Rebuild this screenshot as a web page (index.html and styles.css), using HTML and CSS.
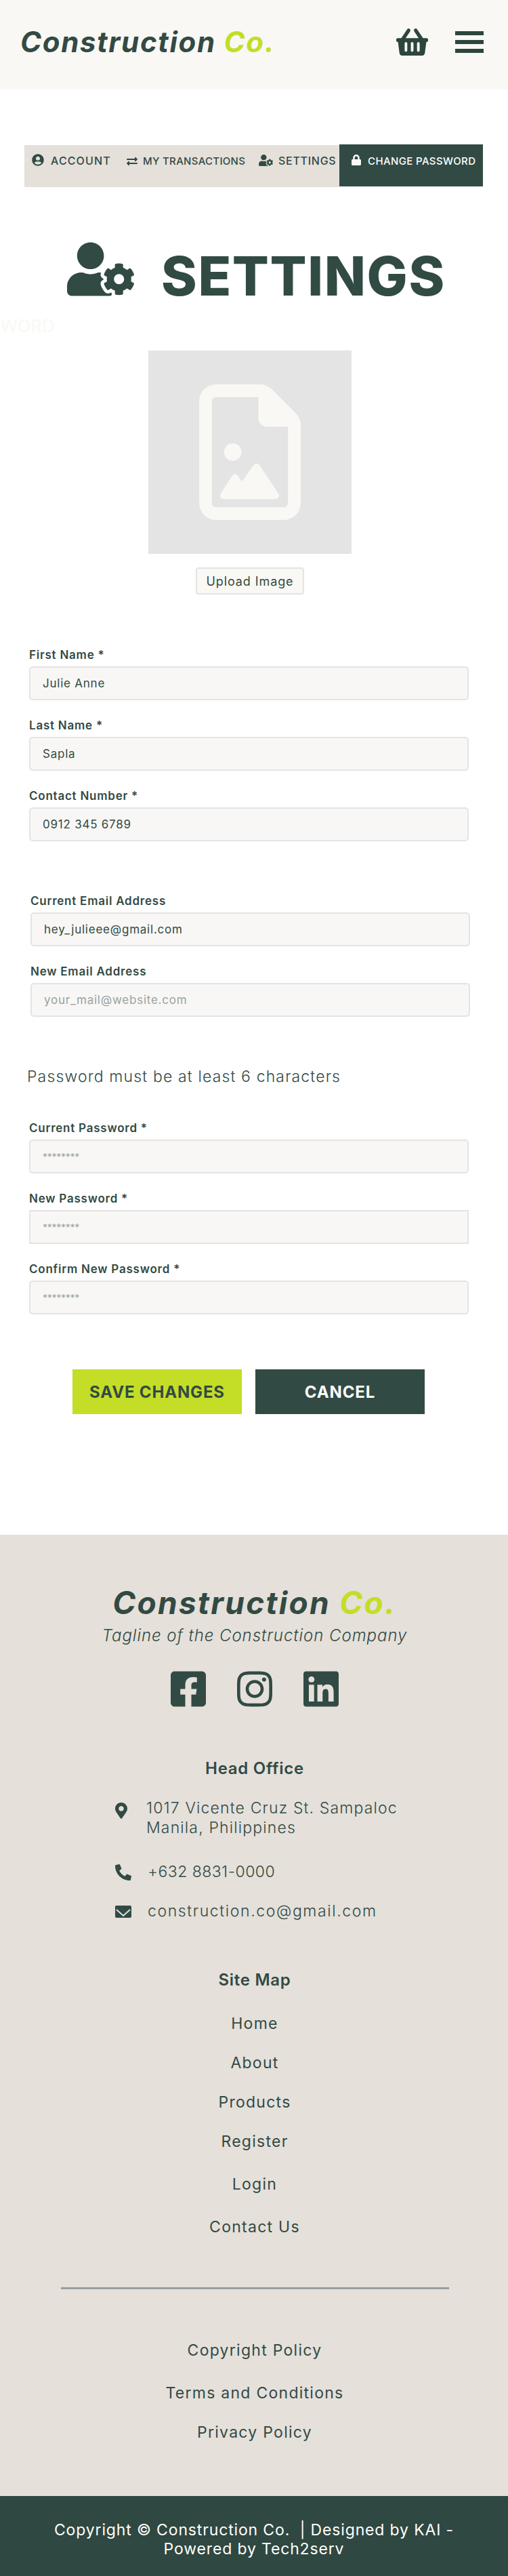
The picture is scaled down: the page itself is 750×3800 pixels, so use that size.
FILE: index.html
```html
<!DOCTYPE html>
<html lang="en">
<head>
<meta charset="utf-8">
<title>Settings - Construction Co.</title>
<link rel="stylesheet" href="styles.css">
</head>
<body>
<header class="topbar">
  <a class="logo logo-small" href="#">Construction <span class="accent">Co.</span></a>
  <div class="top-actions">
    <svg class="icon basket" viewBox="0 32 576 448" preserveAspectRatio="none"><path d="M576 216v16c0 13.255-10.745 24-24 24h-8l-26.113 182.788C514.509 462.435 494.257 480 470.37 480H105.63c-23.887 0-44.139-17.565-47.518-41.212L32 256h-8c-13.255 0-24-10.745-24-24v-16c0-13.255 10.745-24 24-24h67.341l106.78-146.821c10.395-14.292 30.407-17.453 44.701-7.058 14.293 10.395 17.453 30.408 7.058 44.701L170.477 192h235.046L326.12 82.821c-10.395-14.292-7.234-34.306 7.059-44.701 14.291-10.395 34.306-7.235 44.701 7.058L484.659 192H552c13.255 0 24 10.745 24 24zM312 392V280c0-13.255-10.745-24-24-24s-24 10.745-24 24v112c0 13.255 10.745 24 24 24s24-10.745 24-24zm112 0V280c0-13.255-10.745-24-24-24s-24 10.745-24 24v112c0 13.255 10.745 24 24 24s24-10.745 24-24zm-224 0V280c0-13.255-10.745-24-24-24s-24 10.745-24 24v112c0 13.255 10.745 24 24 24s24-10.745 24-24z"/></svg>
    <div class="burger"><span></span><span></span><span></span></div>
  </div>
</header>

<span class="ghost">WORD</span>

<main class="content">
  <nav class="tabs">
    <div class="tab-list">
      <a class="tab tab-account" href="#">
        <svg class="icon i-account" viewBox="0 0 496 512"><path d="M248 8C111 8 0 119 0 256s111 248 248 248 248-111 248-248S385 8 248 8zm0 96c48.6 0 88 39.4 88 88s-39.4 88-88 88-88-39.4-88-88 39.4-88 88-88zm0 344c-58.7 0-111.3-26.6-146.5-68.2 18.8-35.4 55.6-59.8 98.5-59.8 2.4 0 4.8.4 7.1 1.1 13 4.2 26.6 6.9 40.9 6.9 14.3 0 28-2.7 40.9-6.9 2.3-.7 4.7-1.1 7.1-1.1 42.9 0 79.7 24.4 98.5 59.8C359.3 421.4 306.7 448 248 448z"/></svg>
        <span>ACCOUNT</span>
      </a>
      <a class="tab tab-trans" href="#">
        <svg class="icon i-trans" viewBox="0 0 512 512"><path d="M0 168v-16c0-13.255 10.745-24 24-24h360V80c0-21.367 25.899-32.042 40.971-16.971l80 80c9.372 9.373 9.372 24.569 0 33.941l-80 80C409.956 271.982 384 261.456 384 240v-48H24c-13.255 0-24-10.745-24-24zm488 152H128v-48c0-21.314-25.862-32.08-40.971-16.971l-80 80c-9.372 9.373-9.372 24.569 0 33.941l80 80C102.057 463.997 128 453.437 128 432v-48h360c13.255 0 24-10.745 24-24v-16c0-13.255-10.745-24-24-24z"/></svg>
        <span>MY TRANSACTIONS</span>
      </a>
      <a class="tab tab-settings" href="#">
        <svg class="icon i-settings" viewBox="0 0 640 512"><path d="M610.5 373.3c2.6-14.1 2.6-28.5 0-42.6l25.8-14.9c3-1.7 4.3-5.2 3.3-8.5-6.7-21.6-18.2-41.2-33.2-57.4-2.3-2.5-6-3.1-9-1.4l-25.8 14.9c-10.9-9.3-23.4-16.5-36.9-21.3v-29.8c0-3.4-2.4-6.4-5.7-7.1-22.3-5-45-4.8-66.2 0-3.3.7-5.7 3.7-5.7 7.1v29.8c-13.5 4.8-26 12-36.9 21.3l-25.8-14.9c-2.9-1.7-6.7-1.1-9 1.4-15 16.2-26.5 35.8-33.2 57.4-1 3.3.4 6.8 3.3 8.5l25.8 14.9c-2.6 14.1-2.6 28.5 0 42.6l-25.8 14.9c-3 1.7-4.3 5.2-3.3 8.5 6.7 21.6 18.2 41.1 33.2 57.4 2.3 2.5 6 3.1 9 1.4l25.8-14.9c10.9 9.3 23.4 16.5 36.9 21.3v29.8c0 3.4 2.4 6.4 5.7 7.1 22.3 5 45 4.8 66.2 0 3.3-.7 5.7-3.7 5.7-7.1v-29.8c13.5-4.8 26-12 36.9-21.3l25.8 14.9c2.9 1.7 6.7 1.1 9-1.4 15-16.2 26.5-35.8 33.2-57.4 1-3.3-.4-6.8-3.3-8.5l-25.8-14.9zM496 400.5c-26.8 0-48.5-21.8-48.5-48.5s21.8-48.5 48.5-48.5 48.5 21.8 48.5 48.5-21.7 48.5-48.5 48.5zM224 256c70.7 0 128-57.3 128-128S294.7 0 224 0 96 57.3 96 128s57.3 128 128 128zm201.2 226.5c-2.3-1.2-4.6-2.6-6.8-3.9l-7.9 4.6c-6 3.4-12.8 5.3-19.6 5.3-10.9 0-21.4-4.6-28.9-12.6-18.3-19.8-32.3-43.9-40.2-69.6-5.5-17.7 1.9-36.4 17.9-45.7l7.9-4.6c-.1-2.6-.1-5.2 0-7.8l-7.9-4.6c-16-9.2-23.4-28-17.9-45.7.9-2.9 2.2-5.8 3.2-8.7-3.8-.3-7.5-1.2-11.4-1.2h-16.7c-22.2 10.2-46.9 16-72.9 16s-50.6-5.8-72.9-16h-16.7C60.2 288 0 348.2 0 422.4V464c0 26.5 21.5 48 48 48h352c10.1 0 19.5-3.2 27.2-8.5-1.2-3.8-2-7.7-2-11.8v-9.2z"/></svg>
        <span>SETTINGS</span>
      </a>
    </div>
    <a class="tab tab-active" href="#">
      <svg class="icon i-lock" viewBox="0 0 448 512"><path d="M400 224h-24v-72C376 68.2 307.8 0 224 0S72 68.2 72 152v72H48c-26.5 0-48 21.5-48 48v192c0 26.5 21.5 48 48 48h352c26.5 0 48-21.5 48-48V272c0-26.5-21.5-48-48-48zm-104 0H152v-72c0-39.7 32.3-72 72-72s72 32.3 72 72v72z"/></svg>
      <span>CHANGE PASSWORD</span>
    </a>
  </nav>

  <div class="page-title">
    <svg class="icon i-title" viewBox="0 0 640 512"><path d="M610.5 373.3c2.6-14.1 2.6-28.5 0-42.6l25.8-14.9c3-1.7 4.3-5.2 3.3-8.5-6.7-21.6-18.2-41.2-33.2-57.4-2.3-2.5-6-3.1-9-1.4l-25.8 14.9c-10.9-9.3-23.4-16.5-36.9-21.3v-29.8c0-3.4-2.4-6.4-5.7-7.1-22.3-5-45-4.8-66.2 0-3.3.7-5.7 3.7-5.7 7.1v29.8c-13.5 4.8-26 12-36.9 21.3l-25.8-14.9c-2.9-1.7-6.7-1.1-9 1.4-15 16.2-26.5 35.8-33.2 57.4-1 3.3.4 6.8 3.3 8.5l25.8 14.9c-2.6 14.1-2.6 28.5 0 42.6l-25.8 14.9c-3 1.7-4.3 5.2-3.3 8.5 6.7 21.6 18.2 41.1 33.2 57.4 2.3 2.5 6 3.1 9 1.4l25.8-14.9c10.9 9.3 23.4 16.5 36.9 21.3v29.8c0 3.4 2.4 6.4 5.7 7.1 22.3 5 45 4.8 66.2 0 3.3-.7 5.7-3.7 5.7-7.1v-29.8c13.5-4.8 26-12 36.9-21.3l25.8 14.9c2.9 1.7 6.7 1.1 9-1.4 15-16.2 26.5-35.8 33.2-57.4 1-3.3-.4-6.8-3.3-8.5l-25.8-14.9zM496 400.5c-26.8 0-48.5-21.8-48.5-48.5s21.8-48.5 48.5-48.5 48.5 21.8 48.5 48.5-21.7 48.5-48.5 48.5zM224 256c70.7 0 128-57.3 128-128S294.7 0 224 0 96 57.3 96 128s57.3 128 128 128zm201.2 226.5c-2.3-1.2-4.6-2.6-6.8-3.9l-7.9 4.6c-6 3.4-12.8 5.3-19.6 5.3-10.9 0-21.4-4.6-28.9-12.6-18.3-19.8-32.3-43.9-40.2-69.6-5.5-17.7 1.9-36.4 17.9-45.7l7.9-4.6c-.1-2.6-.1-5.2 0-7.8l-7.9-4.6c-16-9.2-23.4-28-17.9-45.7.9-2.9 2.2-5.8 3.2-8.7-3.8-.3-7.5-1.2-11.4-1.2h-16.7c-22.2 10.2-46.9 16-72.9 16s-50.6-5.8-72.9-16h-16.7C60.2 288 0 348.2 0 422.4V464c0 26.5 21.5 48 48 48h352c10.1 0 19.5-3.2 27.2-8.5-1.2-3.8-2-7.7-2-11.8v-9.2z"/></svg>
    <h1>SETTINGS</h1>
  </div>

  <div class="uploader">
    <div class="preview">
      <svg class="i-file" viewBox="0 0 384 512"><path d="M64 464c-8.800 0-16-7.200-16-16V64c0-8.800 7.200-16 16-16H224v80c0 17.700 14.300 32 32 32h80V448c0 8.800-7.200 16-16 16H64zM64 0C28.700 0 0 28.700 0 64V448c0 35.300 28.700 64 64 64H320c35.300 0 64-28.700 64-64V154.500c0-17-6.700-33.300-18.700-45.300L274.700 18.700C262.700 6.700 246.500 0 229.500 0H64z"/><circle cx="127" cy="256" r="33"/><path class="mountain" d="M217 312L289 420L92 420L136 352L161 390Z"/></svg>
    </div>
    <button class="upload-btn" type="button">Upload Image</button>
  </div>

  <form class="form">
    <div class="field"><label>First Name *</label><input type="text" value="Julie Anne"></div>
    <div class="field"><label>Last Name *</label><input type="text" value="Sapla"></div>
    <div class="field"><label>Contact Number *</label><input type="text" value="0912 345 6789"></div>

    <div class="email-group">
      <div class="field"><label>Current Email Address</label><input type="text" value="hey_julieee@gmail.com"></div>
      <div class="field"><label>New Email Address</label><input type="text" placeholder="your_mail@website.com"></div>
    </div>

    <p class="note">Password must be at least 6 characters</p>

    <div class="field"><label>Current Password *</label><input class="pw" type="text" placeholder="********"></div>
    <div class="field"><label>New Password *</label><input class="pw square" type="text" placeholder="********"></div>
    <div class="field"><label>Confirm New Password *</label><input class="pw" type="text" placeholder="********"></div>

    <div class="actions">
      <button class="btn btn-save" type="button">SAVE CHANGES</button>
      <button class="btn btn-cancel" type="button">CANCEL</button>
    </div>
  </form>
</main>

<footer class="footer">
  <div class="footer-main">
    <a class="logo logo-large" href="#">Construction <span class="accent">Co.</span></a>
    <p class="tagline">Tagline of the Construction Company</p>
    <div class="socials">
      <svg class="icon social" viewBox="0 32 448 448"><path d="M400 32H48A48 48 0 0 0 0 80v352a48 48 0 0 0 48 48h137.25V327.69h-63V256h63v-54.64c0-62.15 37-96.48 93.67-96.48 27.14 0 55.52 4.84 55.52 4.84v61h-31.27c-30.81 0-40.42 19.12-40.42 38.73V256h68.78l-11 71.69h-57.78V480H400a48 48 0 0 0 48-48V80a48 48 0 0 0-48-48z"/></svg>
      <svg class="icon social" viewBox="0 32 448 448"><path d="M224.100 141c-63.600 0-114.900 51.300-114.900 114.900s51.300 114.900 114.900 114.900S339 319.500 339 255.900 287.700 141 224.100 141zm0 189.600c-41.100 0-74.700-33.500-74.700-74.700s33.500-74.700 74.700-74.700 74.700 33.500 74.700 74.700-33.600 74.700-74.700 74.700zm146.400-194.300c0 14.900-12 26.800-26.800 26.800-14.900 0-26.800-12-26.800-26.800s12-26.800 26.800-26.800 26.800 12 26.800 26.800zm76.100 27.200c-1.700-35.900-9.900-67.700-36.200-93.900-26.200-26.200-58-34.400-93.900-36.200-37-2.100-147.900-2.100-184.900 0-35.800 1.700-67.600 9.900-93.900 36.100s-34.400 58-36.200 93.900c-2.100 37-2.100 147.900 0 184.900 1.700 35.900 9.900 67.700 36.200 93.900s58 34.400 93.900 36.200c37 2.100 147.900 2.100 184.900 0 35.900-1.700 67.700-9.900 93.900-36.200 26.200-26.200 34.400-58 36.200-93.900 2.100-37 2.100-147.800 0-184.800zM398.800 388c-7.800 19.600-22.900 34.700-42.600 42.600-29.500 11.700-99.500 9-132.100 9s-102.700 2.600-132.100-9c-19.600-7.800-34.700-22.900-42.600-42.600-11.700-29.500-9-99.500-9-132.100s-2.600-102.700 9-132.100c7.800-19.600 22.900-34.700 42.600-42.600 29.500-11.700 99.500-9 132.100-9s102.700-2.600 132.100 9c19.600 7.800 34.700 22.900 42.600 42.600 11.700 29.500 9 99.500 9 132.100s2.700 102.700-9 132.100z"/></svg>
      <svg class="icon social" viewBox="0 32 448 448"><path d="M416 32H31.900C14.300 32 0 46.500 0 64.300v383.400C0 465.500 14.300 480 31.900 480H416c17.600 0 32-14.500 32-32.300V64.300c0-17.800-14.400-32.300-32-32.300zM135.400 416H69V202.200h66.500V416zm-33.200-243c-21.300 0-38.500-17.300-38.500-38.500S80.900 96 102.200 96c21.200 0 38.500 17.300 38.500 38.500 0 21.300-17.200 38.500-38.500 38.500zm282.100 243h-66.400V312c0-24.800-.5-56.700-34.500-56.700-34.600 0-39.900 27-39.900 54.900V416h-66.400V202.200h63.700v29.200h.9c8.900-16.800 30.600-34.500 62.900-34.500 67.200 0 79.700 44.300 79.700 101.900V416z"/></svg>
    </div>

    <h2 class="footer-head head-office">Head Office</h2>
    <ul class="contact">
      <li class="contact-row row-address">
        <svg class="icon i-pin" viewBox="0 0 384 512"><path d="M172.268 501.670C26.970 291.031 0 263.413 0 192 0 85.961 85.961 0 192 0s192 85.961 192 192c0 71.413-26.970 99.031-172.268 309.670-9.535 13.774-29.930 13.773-39.464 0zM192 272c44.183 0 80-35.817 80-80s-35.817-80-80-80-80 35.817-80 80 35.817 80 80 80z"/></svg>
        <span class="address-text">1017 Vicente Cruz St. Sampaloc<br>Manila, Philippines</span>
      </li>
      <li class="contact-row row-phone">
        <svg class="icon i-phone" viewBox="0 0 512 512"><path d="M497.390 361.800l-112-48a24 24 0 0 0-28 6.900l-49.600 60.600A370.660 370.660 0 0 1 130.600 204.110l60.600-49.600a23.940 23.940 0 0 0 6.900-28l-48-112A24.160 24.160 0 0 0 122.600.610l-104 24A24 24 0 0 0 0 48c0 256.500 207.900 464 464 464a24 24 0 0 0 23.400-18.600l24-104a24.290 24.290 0 0 0-14.010-27.600z"/></svg>
        <span>+632 8831-0000</span>
      </li>
      <li class="contact-row row-mail">
        <svg class="i-mail" viewBox="0 0 24 18"><rect width="24" height="18" rx="2"/><path class="mail-fold" d="M2 6l10 9 10-9"/></svg>
        <span>construction.co@gmail.com</span>
      </li>
    </ul>

    <h2 class="footer-head site-map">Site Map</h2>
    <ul class="links">
      <li><a href="#">Home</a></li>
      <li><a href="#">About</a></li>
      <li><a href="#">Products</a></li>
      <li><a href="#">Register</a></li>
      <li class="wide"><a href="#">Login</a></li>
      <li class="wide"><a href="#">Contact Us</a></li>
    </ul>

    <hr class="divider">

    <ul class="links policies">
      <li><a href="#">Copyright Policy</a></li>
      <li class="wide"><a href="#">Terms and Conditions</a></li>
      <li><a href="#">Privacy Policy</a></li>
    </ul>
  </div>
  <div class="copyright">Copyright © Construction Co. &nbsp;| Designed by KAI -<br>Powered by Tech2serv</div>
</footer>
</body>
</html>
```

FILE: styles.css
```css
* { box-sizing: border-box; }

html, body {
  margin: 0;
  padding: 0;
}

body {
  position: relative;
  width: 750px;
  height: 3800px;
  overflow: hidden;
  background: #fff;
  color: #324a44;
  font-family: Inter, "Noto Sans", sans-serif;
  letter-spacing: 0.03em;
}

a { color: inherit; text-decoration: none; }
ul { list-style: none; margin: 0; padding: 0; }
.icon { display: block; fill: #324a44; flex: none; }
.accent { color: #c4dd27; }

/* Header */
.topbar {
  height: 132px;
  padding: 0 36px 8px 30px;
  background: #f9f8f4;
  display: flex;
  align-items: center;
  justify-content: space-between;
}
.logo {
  display: block;
  font-weight: 700;
  font-style: italic;
  white-space: nowrap;
}
.logo-small { font-size: 42px; line-height: 50px; letter-spacing: 0.04em; }
.logo-large { font-size: 46px; line-height: 50px; letter-spacing: 0.05em; }
.top-actions { display: flex; align-items: center; gap: 40px; }
.basket { width: 47px; height: 40px; fill: #2c463e; }
.burger { width: 42px; display: flex; flex-direction: column; gap: 7px; }
.burger span { display: block; height: 6px; background: #2c463e; }

.ghost {
  position: absolute;
  left: 1px;
  top: 466px;
  font-size: 25px;
  line-height: 30px;
  color: #f9f8f4;
}

/* Tabs */
.tabs {
  display: flex;
  align-items: flex-start;
  margin: 82px 0 0 36px;
}
.tab-list {
  width: 465px;
  height: 62px;
  padding: 13px 0 0 11px;
  background: #e5e0da;
  display: flex;
  align-items: flex-start;
}
.tab {
  display: flex;
  align-items: center;
  font-weight: 500;
  white-space: nowrap;
  line-height: 20px;
}
.tab-account { font-size: 16px; gap: 10px; letter-spacing: 0.07em; width: 140px; }
.tab-trans { font-size: 15px; gap: 8px; letter-spacing: 0.02em; width: 195px; margin-top: 1px; }
.tab-settings { font-size: 16px; gap: 8px; letter-spacing: 0.045em; }
.i-account { width: 18px; height: 18px; margin-top: -3px; }
.i-trans { width: 16px; height: 16px; }
.i-settings { width: 21px; height: 17px; margin-top: -2px; }
.tab-active {
  width: 212px;
  height: 62px;
  margin-top: -1px;
  padding: 15px 0 0 18px;
  background: #324a44;
  color: #fff;
  font-size: 15px;
  gap: 10px;
  letter-spacing: 0.025em;
  align-items: flex-start;
}
.i-lock { width: 14px; height: 16px; fill: #f9f8f4; }

/* Title */
.page-title {
  display: flex;
  align-items: flex-start;
  gap: 40px;
  margin: 81px 0 69px 99px;
}
.i-title { width: 99px; height: 80px; }
.page-title h1 {
  margin: 9px 0 0;
  font-size: 80px;
  line-height: 82px;
  font-weight: 800;
  letter-spacing: 0.02em;
}

/* Uploader */
.uploader {
  width: 300px;
  margin-left: 219px;
  display: flex;
  flex-direction: column;
  align-items: center;
  gap: 20px;
}
.preview {
  width: 300px;
  height: 300px;
  background: #e4e4e4;
  display: flex;
  align-items: center;
  justify-content: center;
}
.i-file { width: 150px; height: 200px; fill: #f9f8f4; }
.mountain { stroke: #f9f8f4; stroke-width: 26px; stroke-linejoin: round; }
.upload-btn {
  width: 160px;
  height: 40px;
  padding: 0;
  border: 2px solid #e4e4e4;
  border-radius: 4px;
  background: #f9f8f4;
  color: #324a44;
  font-family: inherit;
  font-size: 18px;
  letter-spacing: 0.05em;
}

/* Form */
.form { margin: 77px 0 0 43px; width: 649px; }
.field { margin-bottom: 25px; }
.field label {
  display: block;
  height: 24px;
  margin-bottom: 5px;
  font-size: 17px;
  line-height: 24px;
  font-weight: 600;
  letter-spacing: 0.045em;
}
.field input {
  display: block;
  width: 100%;
  height: 50px;
  padding: 0 18px;
  border: 2px solid #e4e4e4;
  border-radius: 5px;
  background: #f8f7f5;
  color: #324a44;
  font-family: inherit;
  font-size: 17px;
  letter-spacing: 0.045em;
  outline: none;
}
.field input::placeholder { color: #98a39f; opacity: 1; }
.field input.pw::placeholder { font-size: 14px; letter-spacing: -0.02em; }
.field input.square { border-radius: 0; }

.email-group { margin: 76px -2px 0 2px; }
.email-group .field:last-child { margin-bottom: 0; }

.note {
  margin: 73px 0 49px -3px;
  font-size: 23px;
  line-height: 30px;
  font-weight: 300;
  letter-spacing: 0.05em;
}

.actions {
  display: flex;
  gap: 20px;
  margin: 81px 0 0 64px;
}
.btn {
  width: 250px;
  height: 66px;
  padding: 0;
  border: 0;
  font-family: inherit;
  font-size: 24px;
  font-weight: 700;
  letter-spacing: 0.035em;
}
.btn-save { background: #c4dd27; color: #324a44; }
.btn-cancel { background: #324a44; color: #fff; }

/* Footer */
.footer {
  position: absolute;
  left: 0;
  right: 0;
  bottom: 0;
  top: 2264px;
  background: #e5e0da;
  display: flex;
  flex-direction: column;
  justify-content: space-between;
}
.footer-main {
  padding: 75px 0 0 2px;
  display: flex;
  flex-direction: column;
  align-items: center;
}
.tagline {
  margin: 9px 0 0;
  font-size: 24px;
  line-height: 30px;
  font-style: italic;
  font-weight: 300;
  letter-spacing: 0.04em;
}
.socials {
  display: flex;
  gap: 46px;
  margin-top: 37px;
}
.social { width: 52px; height: 53px; }
.footer-head {
  margin: 0;
  font-size: 24px;
  line-height: 30px;
  font-weight: 600;
  letter-spacing: 0.03em;
}
.head-office { margin-top: 76px; }
.contact {
  width: 412px;
  margin-top: 35px;
  font-size: 23px;
  line-height: 29px;
  font-weight: 300;
  letter-spacing: 0.05em;
  white-space: nowrap;
}
.contact-row { display: flex; align-items: flex-start; }
.row-address { gap: 28px; }
.address-text { margin-top: -6px; }
.row-phone { gap: 24px; margin-top: 36px; align-items: center; letter-spacing: 0.02em; }
.row-mail { gap: 24px; margin-top: 29px; align-items: center; letter-spacing: 0.07em; }
.i-pin { width: 18px; height: 24px; }
.i-phone { width: 24px; height: 24px; }
.i-mail { width: 24px; height: 18px; fill: #324a44; flex: none; }
.mail-fold { fill: none; stroke: #e5e0da; stroke-width: 2px; }
.site-map { margin-top: 72px; }
.links {
  display: flex;
  flex-direction: column;
  align-items: center;
  margin-top: 34px;
  font-size: 23px;
  line-height: 30px;
  letter-spacing: 0.055em;
}
.links li { margin-bottom: 28px; }
.links li.wide { margin-top: 5px; }
.divider {
  width: 573px;
  height: 3px;
  margin: 46px 0 0;
  border: 0;
  background: #959f9c;
}
.policies { margin-top: 75px; }
.copyright {
  height: 118px;
  padding-top: 36px;
  background: #2f4841;
  color: #fff;
  font-size: 23px;
  line-height: 28px;
  text-align: center;
  letter-spacing: 0.037em;
}
```
